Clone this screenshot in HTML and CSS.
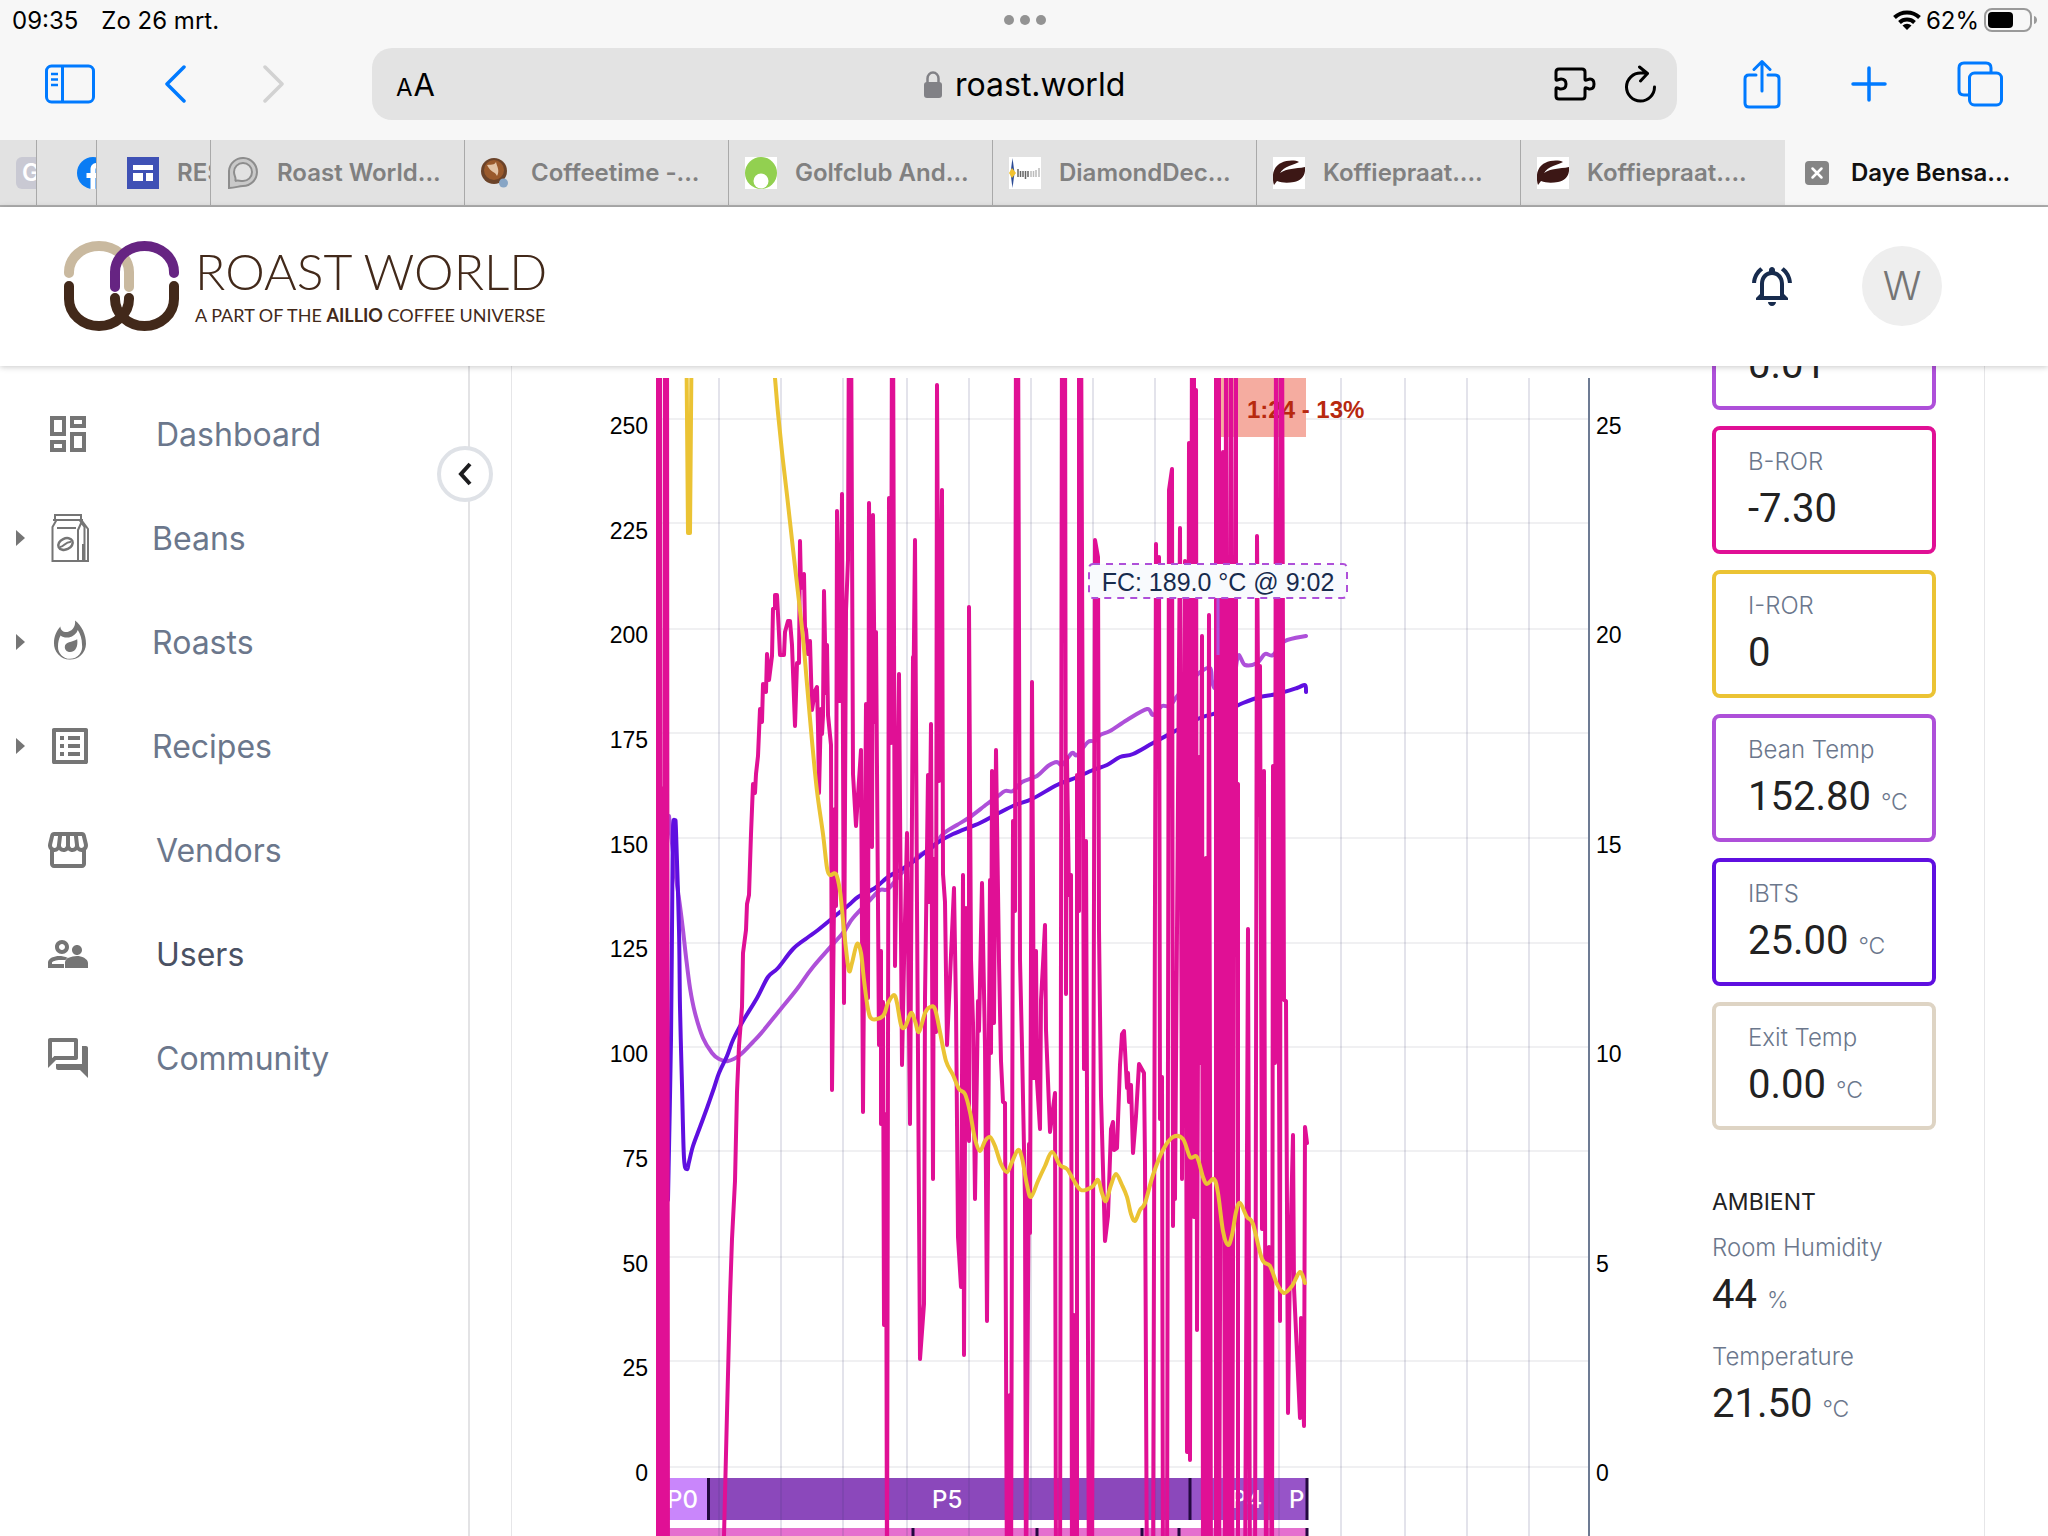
FILE: index.html
```html
<!DOCTYPE html>
<html lang="nl">
<head>
<meta charset="utf-8">
<meta name="viewport" content="width=device-width, initial-scale=1">
<title>Daye Bensa - Roast World</title>
<link rel="stylesheet" href="styles.css">
</head>
<body>
<div class="browser">
  <div class="status">
    <div class="status-side"><span>09:35</span><span>Zo 26 mrt.</span></div>
    <div class="dots"><i></i><i></i><i></i></div>
    <div class="status-side status-right">
      <svg width="28" height="20" viewBox="0 0 28 20"><g fill="none" stroke="#000" stroke-width="4"><path d="M1.500 7.500a18 18 0 0 1 25 0"/><path d="M6.500 12.500a11 11 0 0 1 15 0"/></g><path d="M14 20l-4.500-4.500a6.500 6.500 0 0 1 9 0z"/></svg>
      <span>62%</span>
      <svg width="54" height="24" viewBox="0 0 54 24"><rect x="1" y="1" width="46" height="22" rx="7" fill="none" stroke="#9a9a9a" stroke-width="2"/><rect x="4" y="4" width="25" height="16" rx="4"/><path d="M50 8c4 1 4 7 0 8z" fill="#9a9a9a"/></svg>
    </div>
  </div>
  <div class="toolbar">
    <div class="tools tools-left">
      <button class="tool" aria-label="Sidebar"><svg width="50" height="40" viewBox="0 0 50 40"><g fill="none" stroke="#007aff" stroke-width="3"><rect x="1.500" y="2" width="47" height="36" rx="5"/><path d="M17.500 2v36"/><path d="M6 10h7M6 15.500h7M6 21h7" stroke-width="2.500"/></g></svg></button>
      <button class="tool" aria-label="Back"><svg width="22" height="38" viewBox="0 0 22 38"><path d="M20 2L3 19l17 17" fill="none" stroke="#007aff" stroke-width="3.500" stroke-linecap="round" stroke-linejoin="round"/></svg></button>
      <button class="tool" aria-label="Forward" disabled><svg width="22" height="38" viewBox="0 0 22 38"><path d="M2 2l17 17L2 36" fill="none" stroke="#d2d2d2" stroke-width="3.500" stroke-linecap="round" stroke-linejoin="round"/></svg></button>
    </div>
    <div class="address">
      <button class="tool textsize" aria-label="Text size"><span class="a-small">A</span><span>A</span></button>
      <label class="host"><svg width="18" height="27" viewBox="0 0 18 27"><rect y="11" width="18" height="16" rx="3" fill="#818186"/><path d="M3.500 12V7.500a5.500 6 0 0 1 11 0V12" fill="none" stroke="#818186" stroke-width="2.500"/></svg><input type="text" value="roast.world" aria-label="Address"></label>
      <div class="address-tools">
        <button class="tool" aria-label="Extensions"><svg width="42" height="34" viewBox="0 0 42 34"><path d="M5 2H28q3 0 3 3V12c0 3 3 0 5 0q4 0 4 5t-4 5c-2 0-5-3-5 0v7q0 3-3 3H5q-3 0-3-3V22c0-3 3 0 5 0q5 0 5-5t-5-5c-2 0-5 3-5 0V5q0-3 3-3z" fill="none" stroke="#000" stroke-width="3"/></svg></button>
        <button class="tool" aria-label="Reload"><svg width="32" height="38" viewBox="0 0 32 38"><path d="M29.500 22A14 14 0 1 1 16 8h5M14.500 2l8 6.500-7 7.500" fill="none" stroke="#000" stroke-width="3" stroke-linecap="round" stroke-linejoin="round"/></svg></button>
      </div>
    </div>
    <div class="tools tools-right">
      <button class="tool" aria-label="Share"><svg width="38" height="50" viewBox="0 0 38 50"><path d="M13 16H6q-4 0-4 4v24q0 4 4 4h26q4 0 4-4V20q0-4-4-4h-7M19 32V3M11 10.500L19 2.500l8 8" fill="none" stroke="#007aff" stroke-width="3" stroke-linecap="round" stroke-linejoin="round"/></svg></button>
      <button class="tool" aria-label="New tab"><svg width="36" height="36" viewBox="0 0 36 36"><path d="M18 2v32M2 18h32" stroke="#007aff" stroke-width="3.500" stroke-linecap="round"/></svg></button>
      <button class="tool" aria-label="All tabs"><svg width="46" height="46" viewBox="0 0 46 46"><g fill="none" stroke="#007aff" stroke-width="3"><rect x="12.500" y="12" width="32" height="32" rx="5"/><path d="M12.500 34H7q-5 0-5-5V7q0-5 5-5h22q5 0 5 5v5"/></g></svg></button>
    </div>
  </div>
  <nav class="tabs" aria-label="Tabs">
    <a class="tab tab-g" href="#"><span class="fav fav-g">G</span></a>
    <a class="tab tab-fb" href="#"><svg class="fav" viewBox="0 0 32 32"><circle cx="16" cy="16" r="16" fill="#0a7cf4"/><path d="M13.500 32V21H9.500v-5h4v-3.500c0-4 2.500-6.500 6-6.500l3.500.3v4h-2c-2 0-2.500 1-2.500 2.500V16H23l-.8 5h-3.700v11z" fill="#fff"/></svg></a>
    <a class="tab tab-res" href="#"><svg class="fav" viewBox="0 0 32 32"><path fill="#3f51b5" d="M0 0h32v32H0z"/><path fill="#fff" d="M6 8h20v5H6zM6 16h10v8H6zM19 16h7v8h-7z"/></svg><span>RES</span></a>
    <a class="tab tab-rw" href="#"><svg class="fav" viewBox="0 0 32 32"><path d="M2 31V14a14 14 0 1 1 14 15c-5 0-7 2-14 2z" fill="#c9c9c9" stroke="#8d8d8d" stroke-width="2"/><path d="M8 24c2-2-1-5-1-9a9 9 0 1 1 9 9c-4 0-5-1-8 0z" fill="#e2e2e2" stroke="#8d8d8d" stroke-width="2"/></svg><span>Roast World...</span></a>
    <a class="tab" href="#"><svg class="fav" viewBox="0 0 32 32"><ellipse cx="13" cy="14" rx="13" ry="13" fill="#6b4329"/><circle cx="13" cy="13" r="10" fill="#9a5a2c"/><path d="M6 8c4-1 7 1 9-3 1 5 4 8 1 14-2-5-6-3-10-11z" fill="#e3c4a6"/><circle cx="22.500" cy="26" r="4.500" fill="#87a5c5"/></svg><span>Coffeetime -...</span></a>
    <a class="tab" href="#"><svg class="fav" viewBox="0 0 32 32"><path fill="#fff" d="M0 0h32v32H0z"/><circle cx="16" cy="16" r="16" fill="#92d050"/><circle cx="16" cy="24" r="7.500" fill="#fff"/></svg><span>Golfclub And...</span></a>
    <a class="tab" href="#"><svg class="fav" viewBox="0 0 32 32"><path fill="#fff" d="M0 0h32v32H0z"/><path d="M3.500 1l2 15-2 15-2-15z" fill="#2b4a94"/><path d="M0 16l3-5 4 5-4 5z" fill="#f2c230"/><path d="M9 12v8M11.500 14v6M14 14v6M16.500 14v8M19 14v6" stroke="#666" stroke-width="1.500"/><path d="M22 14v6M24.500 14v6M27 13v7M30 11v9" stroke="#bbb" stroke-width="1.500"/></svg><span>DiamondDec...</span></a>
    <a class="tab" href="#"><svg class="fav" viewBox="0 0 32 32"><path fill="#fff" d="M0 0h32v32H0z"/><path d="M1 28C-2 18 1 9 8 6c6-3 14-3 18-1-5 3-15 4-19 11 7-5 15-4 25-6 1 8-4 14-11 15-6 1-12 1-17-1z" fill="#3c1715"/></svg><span>Koffiepraat....</span></a>
    <a class="tab" href="#"><svg class="fav" viewBox="0 0 32 32"><path fill="#fff" d="M0 0h32v32H0z"/><path d="M1 28C-2 18 1 9 8 6c6-3 14-3 18-1-5 3-15 4-19 11 7-5 15-4 25-6 1 8-4 14-11 15-6 1-12 1-17-1z" fill="#3c1715"/></svg><span>Koffiepraat....</span></a>
    <a class="tab tab-active" href="#" aria-current="page"><svg width="24" height="24" viewBox="0 0 24 24"><rect width="24" height="24" rx="4" fill="#858585"/><path d="M7.500 7.500l9 9M16.500 7.500l-9 9" stroke="#fff" stroke-width="2.500" stroke-linecap="round"/></svg><span>Daye Bensa...</span></a>
  </nav>
</div>

<header class="header">
  <a class="brand" href="#">
    <svg width="115" height="90" viewBox="0 0 115 90"><g fill="none" stroke-width="10" stroke-linecap="round"><path d="M5 32V31A30 26 0 0 1 65 31V46" stroke="#c9b99f"/><path d="M51 46V31A29.500 26 0 0 1 110 31V32" stroke="#662482"/><path d="M5 45V58A30 27 0 0 0 65 58V57M51 57V58A29.500 27 0 0 0 110 58V45" stroke="#42291a"/></g></svg>
    <span class="brand-text"><span class="brand-name">ROAST WORLD</span><span class="brand-sub">A PART OF THE <b>AILLIO</b> COFFEE UNIVERSE</span></span>
  </a>
  <div class="header-tools">
    <button class="tool" aria-label="Notifications"><svg width="48" height="48" viewBox="0 0 24 24" fill="#172b4d"><path d="M12 22c1.100 0 2-.9 2-2h-4c0 1.100.9 2 2 2zm6-6v-5c0-3.070-1.630-5.640-4.500-6.320V4c0-.83-.67-1.500-1.500-1.500s-1.500.67-1.500 1.500v.68C7.640 5.360 6 7.920 6 11v5l-2 2v1h16v-1l-2-2zm-2 1H8v-6c0-2.480 1.510-4.500 4-4.500s4 2.020 4 4.500v6zM7.580 4.080L6.150 2.650C3.750 4.480 2.170 7.300 2.030 10.500h2c.15-2.650 1.510-4.970 3.550-6.420zm12.390 6.420h2c-.15-3.200-1.730-6.020-4.120-7.850l-1.420 1.430c2.020 1.450 3.390 3.770 3.540 6.420z"/></svg></button>
    <button class="avatar" aria-label="Account">W</button>
  </div>
</header>

<div class="page">
  <aside class="sidebar">
    <nav class="menu" aria-label="Main">
      <a class="item" href="#"><svg class="icon" viewBox="0 0 24 24"><path d="M19 5v2h-4V5h4M9 5v6H5V5h4m10 8v6h-4v-6h4M9 17v2H5v-2h4M21 3h-8v6h8V3zM11 3H3v10h8V3zm10 8h-8v10h8V11zm-10 4H3v6h8v-6z"/></svg><span>Dashboard</span></a>
      <a class="item item-sub" href="#"><svg class="arrow" viewBox="0 0 9 16"><path d="M0 0l9 8-9 8z"/></svg><svg class="icon" viewBox="0 0 48 48"><g fill="none" stroke="#757575" stroke-width="2"><path d="M6.500 47V13l4-7h23l5 7v34zM9 6V1h26v5M7 6h30M32 47V16l4-9 6 8v32H32M37 30v16" /><path d="M11 14h19"/><ellipse cx="19.500" cy="30" rx="7.500" ry="5.500" transform="rotate(-25 19.500 30)" stroke-width="2.500"/><path d="M14 33c4 0 6-6 11-5"/></g></svg><span>Beans</span></a>
      <a class="item item-sub" href="#"><svg class="arrow" viewBox="0 0 9 16"><path d="M0 0l9 8-9 8z"/></svg><svg class="icon" viewBox="0 0 24 24"><path d="M14.500 1.300c.4 2.600-1 5-3.400 5.600C8.900 7.400 7.200 6 7.200 4.200 5.200 6.500 4 9 4 12.500a8 8 0 0 0 16 .5c0-4.800-2.100-9.100-5.500-11.700zM12 20.400a6 6 0 0 1-6-6.200c0-1.900.4-3.800 1.300-5.400 1.100.9 2.600 1.200 4.200.9 2.100-.4 3.700-1.800 4.400-3.700 1.300 2 2.100 4.500 2.100 7.200a6.100 6.100 0 0 1-6 7.200z"/><path d="M15.600 10.600c.5 3.600-.8 6.400-3.600 6.400-1.600 0-2.600-1.100-2.600-2.500 0-2.800 3.600-2.200 6.200-3.900z"/></svg><span>Roasts</span></a>
      <a class="item item-sub" href="#"><svg class="arrow" viewBox="0 0 9 16"><path d="M0 0l9 8-9 8z"/></svg><svg class="icon" viewBox="0 0 24 24"><path d="M11 7h6v2h-6zm0 4h6v2h-6zm0 4h6v2h-6zM7 7h2v2H7zm0 4h2v2H7zm0 4h2v2H7zM20.100 3H3.900c-.5 0-.9.4-.9.900v16.200c0 .4.400.9.900.9h16.200c.4 0 .9-.5.9-.9V3.900c0-.5-.5-.9-.9-.9zM19 19H5V5h14v14z"/></svg><span>Recipes</span></a>
      <a class="item" href="#"><svg class="icon" viewBox="0 0 24 24"><path d="M21.900 8.890l-1.050-4.370c-.22-.9-1-1.520-1.910-1.520H5.050c-.9 0-1.690.63-1.900 1.520L2.100 8.890c-.24 1.020-.02 2.060.62 2.880.08.110.19.190.28.290V19c0 1.100.9 2 2 2h14c1.100 0 2-.9 2-2v-6.940c.09-.09.200-.18.280-.28.640-.82.870-1.870.62-2.890zm-2.990-3.900l1.050 4.370c.1.420.01.840-.25 1.170-.14.180-.44.470-.94.470-.61 0-1.140-.49-1.210-1.140L16.980 5l1.930-.01zM13 5h1.960l.54 4.520c.05.390-.07.780-.33 1.070-.22.260-.54.410-.95.410-.67 0-1.220-.59-1.220-1.310V5zM8.490 9.520L9.040 5H11v4.690c0 .72-.55 1.310-1.290 1.310-.34 0-.65-.15-.89-.41-.25-.29-.37-.68-.33-1.070zm-4.450-.16L5.050 5h1.970l-.58 4.860c-.08.650-.6 1.140-1.210 1.140-.49 0-.8-.29-.93-.47-.27-.32-.36-.75-.26-1.170zM5 19v-6.030c.08.010.15.030.23.030.87 0 1.660-.36 2.240-.95.600.600 1.400.95 2.310.95.870 0 1.650-.36 2.230-.93.590.57 1.390.93 2.290.93.840 0 1.640-.35 2.240-.95.580.59 1.370.95 2.240.95.080 0 .15-.02.230-.03V19H5z"/></svg><span>Vendors</span></a>
      <a class="item item-dark" href="#"><svg class="icon" viewBox="0 0 24 24"><path d="M16.500 13c-1.200 0-3.070.34-4.500 1-1.430-.67-3.300-1-4.500-1C5.330 13 2 14.080 2 16.250V19h8v-2H4v-.75c0-.5 2.500-1.500 5-1.250h1.700c.4-.6.9-.9 1.300-1v0c-1 .6-1.500 1.400-1.500 2.300V19H22v-2.500c0-2.170-3.330-3.500-5.500-3.500zM9 12c1.930 0 3.500-1.570 3.500-3.500S10.930 5 9 5 5.500 6.570 5.500 8.500 7.070 12 9 12zm0-5c.83 0 1.500.67 1.500 1.500S9.830 10 9 10s-1.500-.67-1.500-1.500S8.170 7 9 7zm7.500 5.500c1.380 0 2.500-1.120 2.500-2.500s-1.120-2.500-2.500-2.500S14 8.620 14 10s1.120 2.500 2.500 2.500z"/></svg><span>Users</span></a>
      <a class="item" href="#"><svg class="icon" viewBox="0 0 24 24"><path d="M15 4v7H5.170L4 12.170V4h11m1-2H3c-.55 0-1 .45-1 1v14l4-4h10c.55 0 1-.45 1-1V3c0-.55-.45-1-1-1zm5 4h-2v9H6v2c0 .55.450 1 1 1h11l4 4V7c0-.55-.45-1-1-1z"/></svg><span>Community</span></a>
    </nav>
    <button class="collapse" aria-label="Collapse menu"><svg width="16" height="26" viewBox="0 0 16 26"><path d="M13 3L4 13l9 10" fill="none" stroke="#1d1d1f" stroke-width="4"/></svg></button>
  </aside>

  <main class="card">
    <svg class="chart" viewBox="600 366 1040 1170" role="img" aria-label="Roast curve">
      <defs><clipPath id="plot"><rect x="655" y="378" width="936" height="1158"/></clipPath></defs>
      <path class="grid-h" d="M656 419H1588M656 523H1588M656 629H1588M656 733H1588M656 838H1588M656 943H1588M656 1047H1588M656 1151H1588M656 1257H1588M656 1361H1588M656 1467H1588"/>
      <rect x="1218" y="378" width="88" height="59" fill="#f5aca0"/>
      <text class="dev" x="1247" y="418">1:24 - 13%</text>
      <rect x="656" y="1478" width="52" height="42" fill="#c986fb"/>
      <rect x="708" y="1478" width="482" height="42" fill="#8b48bb"/>
      <rect x="1190" y="1478" width="117" height="42" fill="#9754c8"/>
      <rect x="656" y="1528" width="652" height="8" fill="#e570cf"/>
      <path d="M708.500 1478v42M1190 1478v42M1307 1478v42M913 1528v8M1037 1528v8M1142 1528v8M1179 1528v8M1307 1528v8" stroke="#23093f" stroke-width="3"/>
      <text class="phase" x="667" y="1508">P0</text>
      <text class="phase" x="932" y="1508">P5</text>
      <text class="phase" x="1231" y="1508">P4</text>
      <text class="phase" x="1289" y="1508">P</text>
      <path class="grid-v" d="M719 378V1536M781 378V1536M843 378V1536M907 378V1536M969 378V1536M1031 378V1536M1093 378V1536M1155 378V1536M1217 378V1536M1279 378V1536M1341 378V1536M1405 378V1536M1467 378V1536M1529 378V1536"/>
      <path d="M1589 378V1536" stroke="#6d7b93" stroke-width="2"/>
      <g clip-path="url(#plot)">
        <polyline class="line bean smooth" points="669,816 671,834 675,870 680,906 683,930 686,957 690,988 695,1013 703,1038 712,1053 719,1059 728,1061 740,1055 753,1042 763,1031 780,1010 797,989 813,967 842,934 847,927 853,918 870,900 880,890 888,889 900,875 917,857 933,847 943,834 957,825 970,817 987,804 997,797 1005,791 1013,791 1022,782 1037,776 1048,766 1057,762 1062,765 1072,753 1077,755 1088,742 1095,741 1100,735 1110,731 1127,720 1147,709 1153,715 1162,706 1170,706 1178,695 1198,674 1210,668 1212,681 1215,688 1218,675 1227,682 1231,740 1234,690 1238,656 1245,665 1257,663 1265,654 1273,655 1285,641 1306,636"/>
        <polyline class="line ibts smooth" points="668,1200 671,1040 672,930 673,830 675,823 676,831 679,930 680,1007 682,1085 684,1158 687,1169 689,1162 693,1146 700,1127 707,1108 714,1088 719,1073 727,1056 733,1040 743,1021 757,998 768,977 778,968 793,949 807,938 818,930 840,912 850,904 858,897 875,888 888,877 907,866 923,854 937,843 953,834 980,823 997,814 1015,805 1032,799 1057,785 1075,778 1093,770 1107,765 1120,757 1133,754 1153,743 1177,730 1200,718 1217,713 1230,709 1243,703 1260,697 1277,694 1297,688 1305,685 1306,692"/>
        <polyline class="line bror" points="658,1600 658,300 660,300 662,1600 664,788 665,1600 665,300 667,300 668,1600 724,1600 724,1536 727,1413 730,1297 732,1239 735,1181 737,1092 739,1046 742,1007 743,953 746,930 747,904 749,895 751,834 753,784 755,793 756,774 758,756 760,709 762,722 763,684 766,692 767,654 769,680 772,656 773,609 775,607 775,595 777,595 779,634 780,655 784,655 785,632 788,621 790,621 792,645 795,726 797,663 799,663 800,541 801,588 804,574 805,627 806,630 808,654 810,641 812,710 815,691 817,687 818,727 819,793 821,709 822,734 823,716 824,591 826,693 827,645 828,715 831,745 832,1090 835,809 836,906 837,511 840,701 842,494 844,1003 846,611 848,560 849,300 851,300 853,774 856,826 861,750 863,1112 866,704 868,998 869,503 872,847 873,515 875,722 876,632 878,906 879,1045 881,951 881,1124 883,1002 884,1325 886,1114 887,1600 889,498 891,743 892,300 893,300 895,966 899,674 902,1065 904,963 907,833 910,1124 913,657 913,734 915,540 917,906 920,1359 924,1304 925,998 928,775 929,902 931,724 933,1179 934,859 936,1032 937,385 939,781 942,490 943,874 945,902 947,1045 954,888 956,1007 958,1237 961,1287 963,875 964,1355 966,908 969,1141 969,607 971,960 973,1023 975,1199 978,1001 979,1031 982,883 985,1046 987,1321 990,880 991,1053 992,771 994,1023 996,750 999,961 1001,1061 1003,1102 1005,1103 1007,1600 1009,1600 1010,1395 1011,1600 1013,821 1015,911 1016,300 1018,300 1020,960 1022,1046 1025,1200 1026,1600 1029,1144 1030,1233 1032,682 1034,1078 1036,951 1037,1081 1040,1129 1041,1000 1043,964 1045,925 1046,1030 1050,1132 1055,1093 1056,1600 1060,1600 1062,300 1065,300 1066,994 1067,757 1069,895 1071,875 1072,1600 1074,1315 1077,1600 1077,775 1079,911 1079,300 1081,300 1084,1069 1086,841 1089,1600 1092,1600 1095,540 1098,557 1099,930 1101,1096 1105,1241 1108,1216 1111,1129 1113,1122 1114,1150 1117,1148 1120,1065 1122,1034 1124,1031 1127,1088 1128,1073 1129,1102 1131,1085 1133,1153 1136,1116 1139,1064 1144,1073 1145,1162 1147,1600 1153,1600 1156,544 1157,747 1159,557 1160,1119 1162,1077 1163,1600 1167,1600 1169,490 1172,469 1173,1226 1175,973 1175,1199 1180,528 1182,1179 1185,561 1187,1452 1189,443 1190,1460 1192,300 1194,300 1194,1217 1196,390 1197,1330 1199,757 1200,1063 1202,636 1203,1600 1206,858 1207,1600 1209,615 1211,1600 1216,1600 1216,300 1219,300 1219,1600 1223,452 1225,1600 1226,300 1229,1600 1231,300 1232,1600 1236,300 1236,793 1238,784 1238,1600 1245,1600 1248,929 1250,1600 1255,1600 1257,536 1259,815 1260,666 1262,1229 1264,771 1266,1600 1269,1247 1272,1600 1273,766 1275,1063 1276,300 1280,1321 1281,300 1282,300 1284,1000 1286,1001 1288,1413 1290,1259 1293,1135 1294,1288 1300,1418 1301,1318 1304,1426 1305,1127 1307,1143"/>
        <path d="M1218 598V655" stroke="#ae50d9" stroke-width="3"/>
        <polyline class="line iror" points="686,300 688,533 690,533 692,300"/>
        <polyline class="line iror smooth" points="775,378 778,413 782,452 787,495 793,549 797,584 803,638 807,684 812,741 817,791 823,834 827,868 830,875 836,874 840,891 843,920 846,949 849,971 852,963 857,944 861,953 864,980 868,1009 872,1019 883,1016 888,1003 894,995 897,1003 901,1025 905,1027 911,1013 915,1021 919,1032 925,1013 930,1007 935,1009 940,1032 946,1061 953,1075 959,1089 965,1094 970,1112 975,1139 980,1151 985,1141 990,1137 995,1146 1001,1164 1007,1172 1012,1162 1018,1150 1022,1158 1027,1185 1031,1197 1038,1181 1045,1166 1052,1152 1060,1165 1067,1169 1073,1179 1081,1190 1092,1187 1098,1180 1102,1193 1106,1201 1111,1185 1116,1174 1122,1185 1127,1197 1131,1214 1135,1221 1140,1210 1145,1203 1153,1175 1163,1150 1173,1137 1183,1139 1190,1157 1197,1157 1203,1177 1207,1184 1214,1179 1218,1193 1223,1231 1228,1245 1232,1235 1236,1212 1240,1203 1247,1217 1253,1224 1262,1259 1270,1266 1277,1284 1284,1293 1292,1286 1300,1272 1305,1283"/>
      </g>
      <rect x="1089" y="564" width="258" height="34" rx="4" fill="#f8fafd" stroke="#ae50d9" stroke-width="2" stroke-dasharray="7 6"/>
      <text class="fc" x="1218" y="591">FC: 189.0 °C @ 9:02</text>
      <g class="axis axis-left"><text x="648" y="434">250</text><text x="648" y="539">225</text><text x="648" y="643">200</text><text x="648" y="748">175</text><text x="648" y="853">150</text><text x="648" y="957">125</text><text x="648" y="1062">100</text><text x="648" y="1167">75</text><text x="648" y="1272">50</text><text x="648" y="1376">25</text><text x="648" y="1481">0</text></g>
      <g class="axis"><text x="1596" y="434">25</text><text x="1596" y="643">20</text><text x="1596" y="853">15</text><text x="1596" y="1062">10</text><text x="1596" y="1272">5</text><text x="1596" y="1481">0</text></g>
    </svg>

    <section class="readouts" aria-label="Readings">
      <div class="box box-bean box-first"><span class="value">0.01</span></div>
      <div class="box box-bror"><span class="label">B-ROR</span><span class="value">-7.30</span></div>
      <div class="box box-iror"><span class="label">I-ROR</span><span class="value">0</span></div>
      <div class="box box-bean"><span class="label">Bean Temp</span><span class="value">152.80 <small>°C</small></span></div>
      <div class="box box-ibts"><span class="label">IBTS</span><span class="value">25.00 <small>°C</small></span></div>
      <div class="box box-exit"><span class="label">Exit Temp</span><span class="value">0.00 <small>°C</small></span></div>
      <div class="ambient">
        <h2>AMBIENT</h2>
        <div class="reading"><span class="label">Room Humidity</span><span class="value">44 <small>%</small></span></div>
        <div class="reading"><span class="label">Temperature</span><span class="value">21.50 <small>°C</small></span></div>
      </div>
    </section>
  </main>
</div>
<script src="chart.js"></script>
</body>
</html>
```
FILE: chart.js
```js
// Replaces each smoothed series with a curve that runs through its points.
document.querySelectorAll('.smooth').forEach(function (line) {
  var p = line.getAttribute('points').split(' ').map(function (s) { return s.split(',').map(Number); });
  var d = 'M' + p[0];
  for (var i = 0; i < p.length - 1; i++) {
    var a = p[i - 1] || p[i], b = p[i], c = p[i + 1], e = p[i + 2] || c;
    d += 'C' + [b[0] + (c[0] - a[0]) / 6, b[1] + (c[1] - a[1]) / 6,
                c[0] - (e[0] - b[0]) / 6, c[1] - (e[1] - b[1]) / 6, c[0], c[1]].join(' ');
  }
  var path = document.createElementNS('http://www.w3.org/2000/svg', 'path');
  path.setAttribute('class', line.getAttribute('class'));
  path.setAttribute('d', d);
  line.replaceWith(path);
});
```
FILE: styles.css
```css
* { box-sizing: border-box; }
body {
  margin: 0;
  height: 100vh;
  display: flex;
  flex-direction: column;
  overflow: hidden;
  background: #fff;
  font-family: Inter, "Open Sans", sans-serif;
  color: #222;
}
a { color: inherit; text-decoration: none; }
svg { display: block; flex: none; }
.tool { border: 0; padding: 0; background: none; font: inherit; color: #000; display: flex; }

/* browser chrome */
.browser { background: #f7f7f7; flex: none; }
.status { display: grid; grid-template-columns: 1fr auto 1fr; align-items: center; height: 40px; padding: 0 10px 0 12px; font-size: 24px; font-weight: 400; color: #000; }
.status-side { display: flex; align-items: center; gap: 23px; }
.status-right { justify-content: flex-end; gap: 5px; }
.dots { display: flex; gap: 6px; }
.dots i { width: 10px; height: 10px; border-radius: 50%; background: #939393; }
.toolbar { display: flex; align-items: center; height: 100px; padding-bottom: 12px; }
.tools { display: flex; align-items: center; flex: none; }
.tools-left { width: 372px; padding-left: 45px; gap: 69px; }
.tools-left .tool:last-child { margin-left: 8px; }
.tools-right { width: 371px; padding-left: 66px; gap: 70px; }
.address { flex: 1; display: grid; grid-template-columns: 1fr auto 1fr; align-items: center; height: 72px; padding: 0 20px 0 24px; border-radius: 20px; background: #e3e3e3; }
.textsize { align-items: baseline; gap: 1px; font-size: 31px; }
.a-small { font-size: 24px; }
.host { display: flex; align-items: center; gap: 13px; }
.host input { width: 174px; border: 0; padding: 0; background: none; font: 400 32px Inter, sans-serif; color: #000; }
.address-tools { display: flex; align-items: center; justify-content: flex-end; gap: 29px; }
.tabs { display: grid; grid-template-columns: 37px 60px 114px 254fr repeat(5, 264fr) 263fr; height: 67px; border-bottom: 2px solid #b0b0b0; }
.tab { display: flex; align-items: center; gap: 18px; min-width: 0; overflow: hidden; padding-left: 16px; border-right: 1px solid #a9a9a9; background: #e2e2e2; color: #808080; font-size: 24px; font-weight: 600; white-space: nowrap; }
.fav { width: 32px; height: 32px; flex: none; }
.fav-g { border-radius: 6px; background: #c9c9d3; color: #fff; font-size: 24px; line-height: 32px; padding-left: 6px; }
.tab-fb { padding-left: 40px; }
.tab-res { padding-left: 30px; }
.tab:nth-child(9) { border-right: 0; }
.tab-active { gap: 22px; padding-left: 20px; border: 0; background: #f7f7f7; color: #111; }

/* site header */
.header { position: relative; z-index: 2; flex: none; display: flex; align-items: center; justify-content: space-between; height: 159px; padding: 0 106px 2px 64px; background: #fff; box-shadow: 0 1px 6px rgba(0, 0, 0, .22); }
.brand { display: flex; gap: 16px; color: #42291a; font-family: Lato, sans-serif; }
.brand-text { display: flex; flex-direction: column; gap: 2px; }
.brand-name { font-size: 50px; line-height: 60px; font-weight: 300; }
.brand-sub { font-size: 18px; line-height: 24px; }
.header-tools { display: flex; align-items: center; gap: 66px; }
.avatar { width: 80px; height: 80px; border: 0; border-radius: 50%; background: #eee; color: #757575; font: 300 40px Inter, sans-serif; }

/* page */
.page { flex: 1; min-height: 0; display: flex; }
.sidebar { position: relative; flex: none; width: 470px; border-right: 2px solid #e3e3e5; padding-top: 16px; }
.menu { display: flex; flex-direction: column; }
.item { display: flex; align-items: center; height: 104px; padding-left: 44px; gap: 64px; font-size: 32px; color: #6b778c; }
.item-sub { padding-left: 16px; gap: 58px; }
.item-sub .arrow { margin-right: -37px; }
.item-dark { color: #4a5163; }
.icon { width: 48px; height: 48px; fill: #757575; }
.arrow { width: 9px; height: 16px; fill: #757575; }
.collapse { position: absolute; right: -25px; top: 80px; width: 56px; height: 56px; display: flex; align-items: center; justify-content: center; padding: 0; border: 4px solid #dfe2e7; border-radius: 50%; background: #fff; }
.card { flex: 1; min-width: 0; display: flex; align-items: flex-start; gap: 72px; margin: 0 63px 0 41px; padding: 0 48px 0 88px; border: solid #e6e6e8; border-width: 0 1px; }
.chart { flex: 1 1 0; min-width: 0; width: 0; }
.grid-h { stroke: #f0f0f2; stroke-width: 2; }
.grid-v { stroke: rgba(60, 60, 110, .14); stroke-width: 2; }
.line { fill: none; stroke-width: 4; stroke-linecap: round; stroke-linejoin: round; }
.bean { stroke: #ae50d9; }
.ibts { stroke: #5f0fe0; }
.bror { stroke: #e01095; }
.iror { stroke: #ebc334; }
.axis, .fc, .dev, .phase { font-family: "Liberation Sans", Arial, sans-serif; font-size: 23px; fill: #000; }
.axis-left { text-anchor: end; }
.fc { font-size: 25px; fill: #172b4d; text-anchor: middle; }
.dev { font-size: 24px; font-weight: 700; fill: #b8290f; }
.phase { font-family: Inter, sans-serif; font-size: 24px; font-weight: 500; fill: #fff; }

.readouts { flex: none; width: 224px; display: flex; flex-direction: column; gap: 16px; }
.box { display: flex; flex-direction: column; height: 128px; padding: 16px 0 0 32px; border: 4px solid; border-radius: 8px; }
.box-first { margin-top: -84px; padding-top: 48px; }
.box-bean { border-color: #ae50d9; }
.box-bror { border-color: #e01095; }
.box-iror { border-color: #ebc334; }
.box-ibts { border-color: #5f0fe0; }
.box-exit { border-color: #ded4c4; }
.label { font-size: 24px; line-height: 32px; font-weight: 300; color: #6b778c; }
.value { font-family: Roboto, sans-serif; font-size: 40px; line-height: 62px; font-weight: 400; color: #222; white-space: nowrap; }
.value small { font-family: Inter, sans-serif; font-size: 23px; font-weight: 300; color: #6b778c; }
.ambient { padding-top: 40px; }
.ambient h2 { margin: 0 0 14px; font-size: 23px; line-height: 32px; font-weight: 400; }
.reading { display: flex; flex-direction: column; margin-bottom: 10px; }
```
